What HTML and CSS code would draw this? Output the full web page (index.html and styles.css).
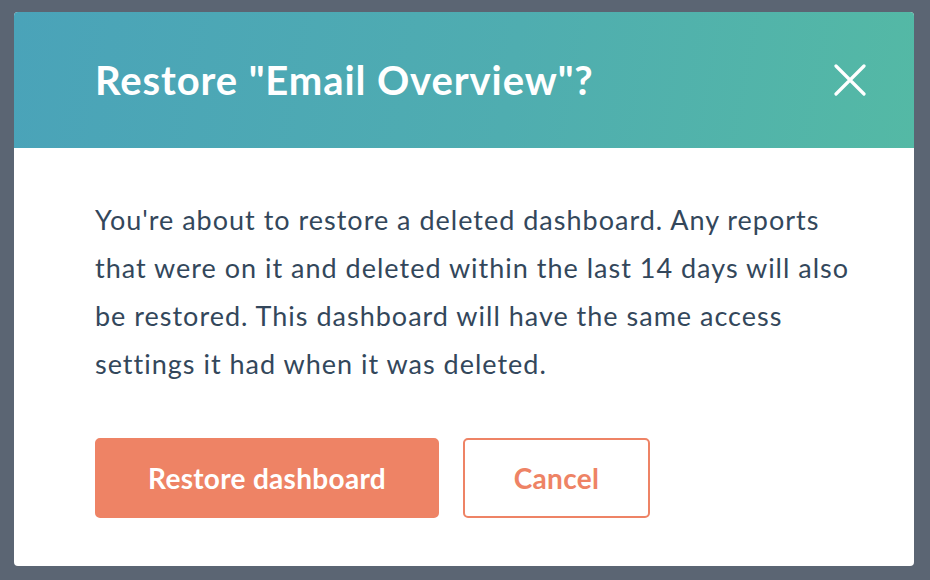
FILE: index.html
```html
<!DOCTYPE html>
<html lang="en">
<head>
<meta charset="utf-8">
<title>Restore dashboard</title>
<link rel="stylesheet" href="styles.css">
</head>
<body>
<div class="overlay">
  <div class="modal" role="dialog" aria-labelledby="modal-title">
    <header class="modal-header">
      <h1 id="modal-title" class="modal-title">Restore "Email Overview"?</h1>
      <button class="close-btn" aria-label="Close">
        <svg viewBox="0 0 32 32" width="32" height="32" aria-hidden="true">
          <path d="M2 2 L30 30 M30 2 L2 30" stroke="#fff" stroke-width="3.2" stroke-linecap="round" fill="none"/>
        </svg>
      </button>
    </header>
    <div class="modal-body">
      <p class="modal-text">You're about to restore a deleted dashboard. Any reports that were on it and deleted within the last 14 days will also be restored. This dashboard will have the same access settings it had when it was deleted.</p>
      <div class="actions">
        <button class="btn btn-primary">Restore dashboard</button>
        <button class="btn btn-secondary">Cancel</button>
      </div>
    </div>
  </div>
</div>
</body>
</html>
```
FILE: styles.css
```css
* { box-sizing: border-box; }
html, body { margin: 0; height: 100%; }
body {
  background: #5b6573;
  font-family: Lato, "Open Sans", sans-serif;
}
.overlay {
  padding: 12px 16px 14px 14px;
  height: 580px;
}
.modal {
  width: 900px;
  height: 554px;
  background: #fff;
  border-radius: 4px;
  overflow: hidden;
  display: flex;
  flex-direction: column;
}
.modal-header {
  height: 136px;
  flex: none;
  background: linear-gradient(100deg, #4aa3b9 0%, #4fadb0 55%, #54b9a5 100%);
  display: flex;
  align-items: center;
  justify-content: space-between;
  padding: 0 48px 0 81px;
}
.modal-title {
  margin: 0;
  color: #fff;
  font-size: 40px;
  font-weight: 700;
  letter-spacing: 0.9px;
}
.close-btn {
  background: none;
  border: 0;
  padding: 0;
  width: 32px;
  height: 32px;
  display: flex;
  cursor: pointer;
}
.modal-body {
  padding: 48px 56px 0 81px;
}
.modal-text {
  margin: 0;
  color: #33475b;
  font-size: 27px;
  line-height: 48px;
  letter-spacing: 1px;
}
.actions {
  margin-top: 50px;
  display: flex;
  gap: 24px;
}
.btn {
  height: 80px;
  border-radius: 5px;
  font-family: inherit;
  font-size: 28px;
  font-weight: 700;
  letter-spacing: 0.3px;
  cursor: pointer;
}
.btn-primary {
  width: 344px;
  background: #ee8365;
  border: 2px solid #ee8365;
  color: #fff;
}
.btn-secondary {
  width: 187px;
  background: #fff;
  border: 2px solid #ee8365;
  color: #ee8365;
}
```
